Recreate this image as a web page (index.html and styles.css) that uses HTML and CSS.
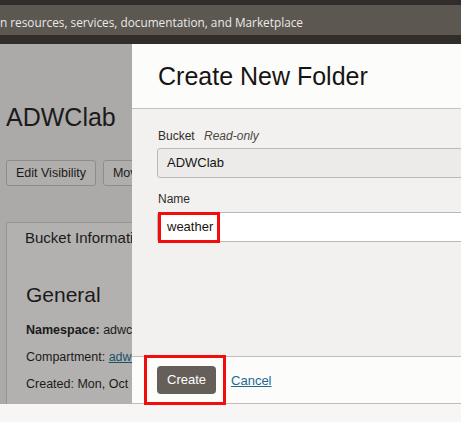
FILE: index.html
```html
<!DOCTYPE html>
<html lang="en">
<head>
<meta charset="utf-8">
<title>Create New Folder</title>
<link rel="stylesheet" href="styles.css">
</head>
<body>
<header class="topbar">
  <div class="search">n resources, services, documentation, and Marketplace</div>
</header>
<div class="main">
  <section class="page">
    <h1 class="page-title">ADWClab</h1>
    <div class="actions">
      <span class="btn">Edit Visibility</span>
      <span class="btn">Move Resource</span>
    </div>
    <div class="panel">
      <div class="tab">Bucket Information</div>
      <h2 class="general">General</h2>
      <p class="row"><b>Namespace:</b> adwc4pm</p>
      <p class="row">Compartment: <a class="plink">adwc4pm</a></p>
      <p class="row">Created: Mon, Oct 7, 2019</p>
    </div>
  </section>
  <section class="modal">
    <div class="modal-head">
      <h2 class="modal-title">Create New Folder</h2>
    </div>
    <div class="modal-body">
      <div class="label">Bucket <i class="ro">Read-only</i></div>
      <div class="field readonly">ADWClab</div>
      <div class="label gap">Name</div>
      <div class="field name">
        <span class="val">weather</span>
        <span class="hl hl-name"></span>
      </div>
    </div>
    <div class="modal-foot">
      <span class="create">Create</span>
      <a class="cancel">Cancel</a>
      <span class="hl hl-create"></span>
    </div>
  </section>
</div>
<div class="bottom"></div>
</body>
</html>
```
FILE: styles.css
```css
* { box-sizing: border-box; }
html, body { margin: 0; padding: 0; }
body {
  width: 461px;
  height: 422px;
  overflow: hidden;
  background: #f7f6f4;
  font-family: "Liberation Sans", Arial, sans-serif;
}
.topbar {
  height: 44px;
  background: #312d2a;
  padding-top: 5px;
}
.search {
  height: 30px;
  background: #5c5751;
  color: #ebe9e6;
  font-family: "Open Sans", "Noto Sans", sans-serif;
  font-size: 11.8px;
  line-height: 30px;
  padding-top: 2px;
  white-space: nowrap;
  overflow: hidden;
}
.main {
  display: flex;
  height: 360px;
}
.page {
  width: 132px;
  flex: none;
  background: #abaaa9;
  overflow: hidden;
  white-space: nowrap;
  display: flex;
  flex-direction: column;
  color: #1b1a19;
}
.page-title {
  margin: 58px 0 0 6px;
  font-size: 25px;
  font-weight: normal;
  line-height: 30px;
}
.actions {
  display: flex;
  gap: 7px;
  margin: 28px 0 0 6px;
}
.btn {
  height: 26px;
  border: 1px solid #8e8d8b;
  border-radius: 3px;
  padding: 0 9px;
  font-size: 12.5px;
  line-height: 24px;
  background: #afaead;
  flex: none;
}
.panel {
  flex: 1;
  margin: 36px 0 0 6px;
  border-left: 1px solid #969593;
  border-top: 1px solid #969593;
  background: #b2b1b0;
  padding-left: 18px;
}
.tab {
  font-size: 15px;
  line-height: 18px;
  margin-top: 6px;
}
.general {
  font-size: 21px;
  font-weight: normal;
  line-height: 24px;
  margin: 36px 0 0 1px;
}
.row {
  font-size: 12.5px;
  line-height: 16px;
  margin: 0 0 0 1px;
}
.general + .row { margin-top: 15px; }
.row + .row { margin-top: 11px; }
.plink {
  color: #17546b;
  text-decoration: underline;
}
.modal {
  flex: 1;
  display: flex;
  flex-direction: column;
  background: #fcfcfb;
  min-width: 0;
}
.modal-head {
  height: 65px;
  border-bottom: 1px solid #c6c2be;
  padding: 18px 0 0 26px;
}
.modal-title {
  margin: 0;
  font-size: 25px;
  font-weight: normal;
  line-height: 28px;
  color: #161513;
}
.modal-body {
  flex: 1;
  background: #f2f1ef;
  padding: 19px 0 0 25px;
}
.label {
  font-size: 12px;
  line-height: 17px;
  color: #312d2a;
  padding-left: 1px;
}
.ro {
  margin-left: 6px;
  color: #4b4743;
}
.gap { margin-top: 13px; }
.field {
  height: 30px;
  margin-right: -20px;
  border: 1px solid #bdb8b3;
  border-radius: 3px;
  font-size: 13px;
  line-height: 28px;
  padding-left: 9px;
  color: #161513;
}
.readonly {
  margin-top: 3px;
  background: #ecebe9;
}
.name {
  margin-top: 4px;
  background: #ffffff;
  position: relative;
}
.val { position: relative; }
.hl {
  position: absolute;
  border: 3px solid #f20d0d;
}
.hl-name {
  left: 0;
  top: -1px;
  width: 62px;
  height: 31px;
}
.modal-foot {
  height: 48px;
  border-top: 1px solid #c2bdb9;
  border-bottom: 1px solid #c2bdb9;
  display: flex;
  align-items: center;
  padding-left: 25px;
  gap: 15px;
  position: relative;
  background: #fcfcfb;
}
.create {
  height: 28px;
  padding: 0 10px;
  background: #665e59;
  color: #ffffff;
  border-radius: 4px;
  font-size: 13px;
  line-height: 28px;
}
.cancel {
  color: #1c6b8f;
  font-size: 13px;
  text-decoration: underline;
}
.hl-create {
  left: 12px;
  top: -2px;
  width: 82px;
  height: 50px;
}
.bottom {
  height: 18px;
  background: #f7f6f4;
}
```
